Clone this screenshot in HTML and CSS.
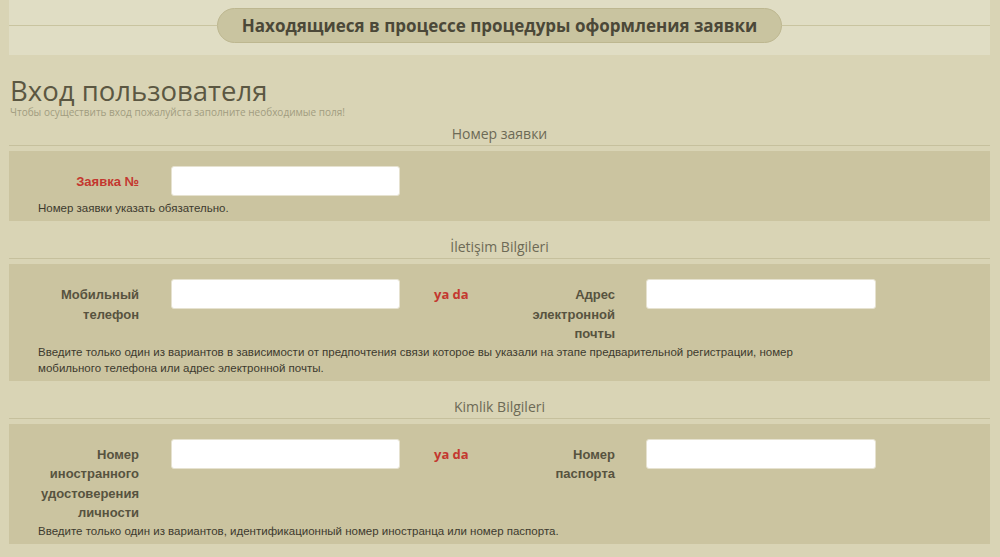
FILE: index.html
```html
<!DOCTYPE html>
<html lang="ru">
<head>
<meta charset="utf-8">
<title>Вход пользователя</title>
<link rel="stylesheet" href="styles.css">
</head>
<body>
<div class="page">
  <div class="banner">
    <div class="pill">Находящиеся в процессе процедуры оформления заявки</div>
  </div>

  <h1 class="title">Вход пользователя</h1>
  <p class="subtitle">Чтобы осуществить вход пожалуйста заполните необходимые поля!</p>

  <h3 class="sec-title">Номер заявки</h3>
  <div class="sec-box">
    <div class="row">
      <label class="lbl req">Заявка №</label>
      <input class="field" type="text">
    </div>
    <p class="hint">Номер заявки указать обязательно.</p>
  </div>

  <h3 class="sec-title">İletişim Bilgileri</h3>
  <div class="sec-box">
    <div class="row">
      <label class="lbl">Мобильный телефон</label>
      <input class="field" type="text">
      <span class="or">ya da</span>
      <label class="lbl lbl2">Адрес электронной почты</label>
      <input class="field field2" type="text">
    </div>
    <p class="hint">Введите только один из вариантов в зависимости от предпочтения связи которое вы указали на этапе предварительной регистрации, номер мобильного телефона или адрес электронной почты.</p>
  </div>

  <h3 class="sec-title">Kimlik Bilgileri</h3>
  <div class="sec-box">
    <div class="row">
      <label class="lbl">Номер иностранного удостоверения личности</label>
      <input class="field" type="text">
      <span class="or">ya da</span>
      <label class="lbl lbl2">Номер паспорта</label>
      <input class="field field2" type="text">
    </div>
    <p class="hint">Введите только один из вариантов, идентификационный номер иностранца или номер паспорта.</p>
  </div>
</div>
</body>
</html>
```

FILE: styles.css
```css
html, body {
  margin: 0;
  padding: 0;
}
body {
  background: #d9d4b5;
  font-family: "Open Sans", "Liberation Sans", sans-serif;
  color: #4d4a3a;
}
.page {
  margin: 0 10px 0 9px;
  padding-bottom: 20px;
}

/* top banner */
.banner {
  background: #e0ddc4;
  display: flex;
  align-items: center;
  padding: 8px 0 12px;
}
.banner::before,
.banner::after {
  content: "";
  flex: 1;
  border-top: 1px solid #c9c4a0;
}
.pill {
  box-sizing: border-box;
  height: 35px;
  line-height: 33px;
  padding: 0 24px;
  border: 1px solid #bdb790;
  border-radius: 18px;
  background: #c9c4a0;
  font-weight: 700;
  font-size: 17px;
  color: #4b4838;
  white-space: nowrap;
}

/* title */
.title {
  margin: 23px 0 0 1px;
  font-weight: 400;
  font-size: 27.5px;
  line-height: 26px;
  color: #5b5742;
}
.subtitle {
  margin: 1px 0 0 1px;
  font-size: 10px;
  line-height: 14px;
  color: #a19c80;
}

/* sections */
.sec-title {
  margin: 5px 0 5px;
  padding-bottom: 1px;
  font-weight: 400;
  font-size: 14px;
  line-height: 20px;
  text-align: center;
  color: #6d6a56;
  border-bottom: 1px solid #c6c09d;
}
.sec-box + .sec-title {
  margin-top: 16px;
}
.sec-box {
  background: #cbc4a0;
  padding: 15px 0 5px;
}
.row {
  display: flex;
  align-items: flex-start;
}
.lbl {
  box-sizing: border-box;
  width: 130px;
  padding: 6px 0 0 30px;
  text-align: right;
  font-family: "Liberation Sans", Arial, sans-serif;
  font-weight: 700;
  font-size: 13px;
  line-height: 19.5px;
  color: #57533f;
}
.lbl.req {
  color: #c4372f;
}
.field {
  box-sizing: border-box;
  width: 229px;
  height: 30px;
  margin: 0 0 4px 32px;
  border: 1px solid #e6e2d0;
  border-radius: 3px;
  background: #fff;
  padding: 0 6px;
}
.or {
  width: 81px;
  margin-left: 34px;
  padding-top: 6px;
  font-weight: 700;
  font-size: 13px;
  line-height: 19px;
  color: #c4372f;
}
.lbl2 {
  width: 100px;
  padding-left: 0;
}
.field2 {
  width: 230px;
  margin-left: 31px;
}
.hint {
  margin: 0;
  padding-left: 29px;
  max-width: 790px;
  font-family: "Liberation Sans", Arial, sans-serif;
  font-size: 11.5px;
  line-height: 16px;
  color: #3d3a2e;
}
```
